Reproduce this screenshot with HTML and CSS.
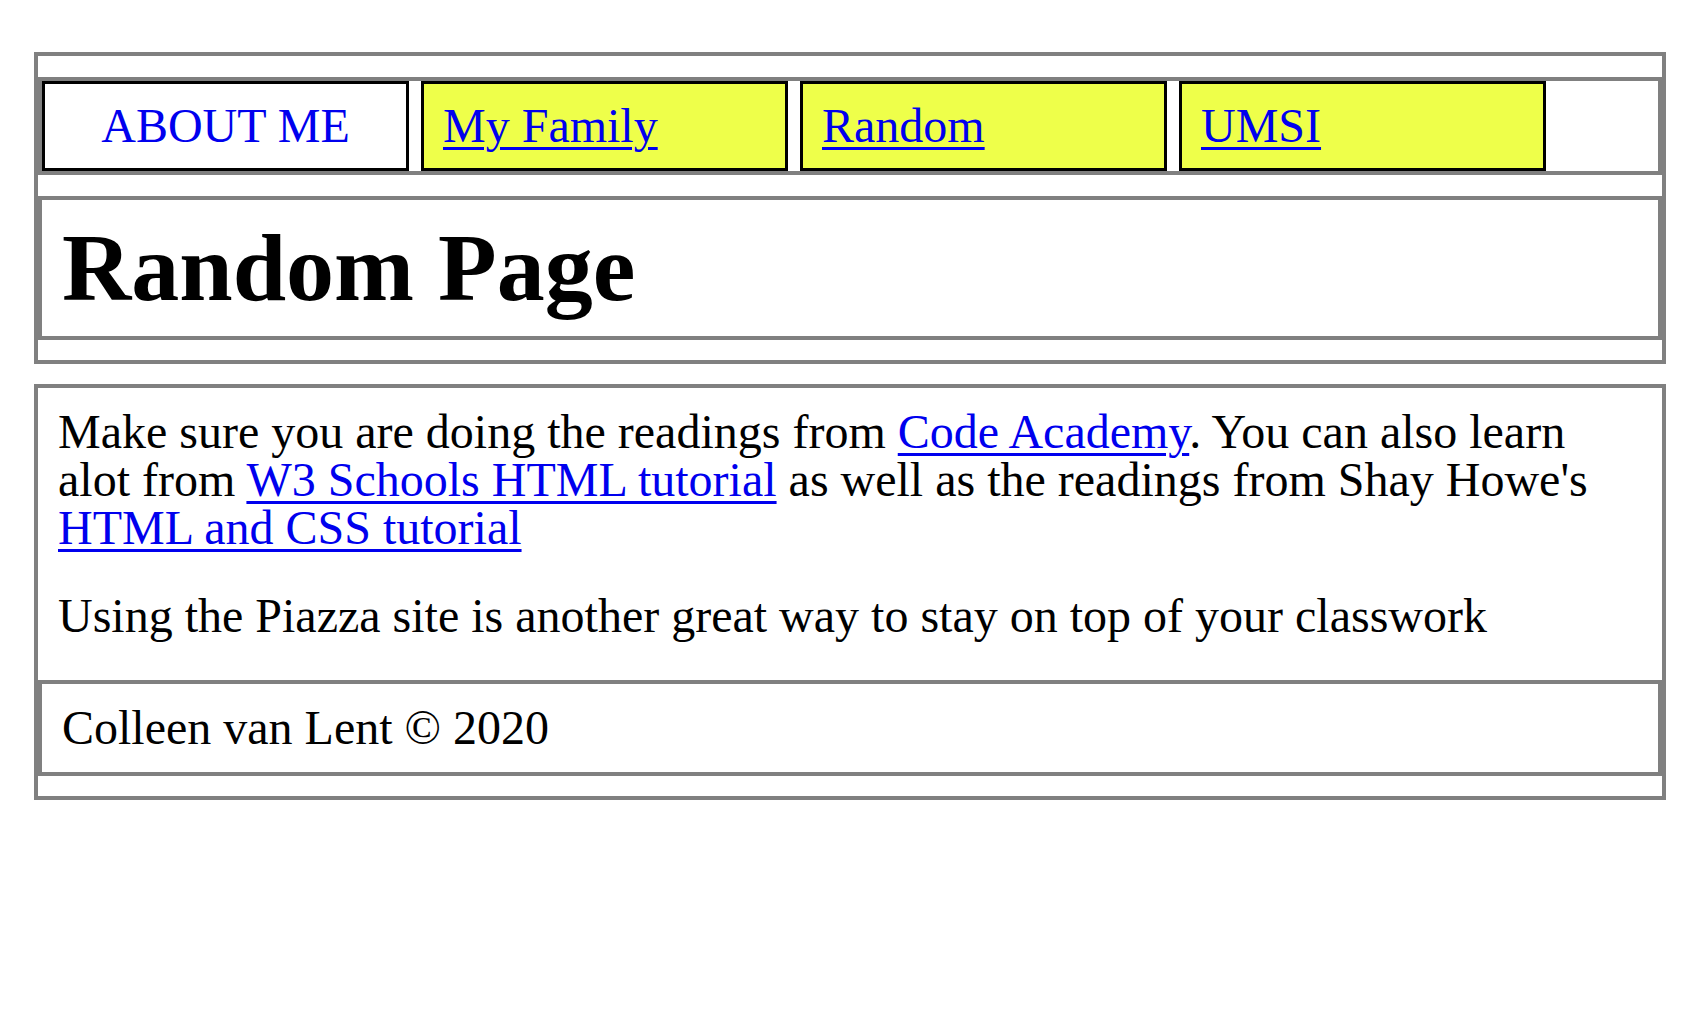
FILE: index.html
```html
<!DOCTYPE html>
<html lang="en">
<head>
<meta charset="utf-8">
<title>Random Page</title>
<link rel="stylesheet" href="styles.css">
</head>
<body>
<header class="site-header">
  <nav class="nav">
    <ul class="nav-list">
      <li class="nav-item nav-item--home"><a class="nav-link nav-link--home" href="#">ABOUT ME</a></li>
      <li class="nav-item"><a class="nav-link" href="#">My Family</a></li>
      <li class="nav-item"><a class="nav-link" href="#">Random</a></li>
      <li class="nav-item"><a class="nav-link" href="#">UMSI</a></li>
    </ul>
  </nav>
  <div class="title-box">
    <h1 class="title">Random Page</h1>
  </div>
</header>
<main class="main">
  <p class="text">Make sure you are doing the readings from <a href="#">Code Academy</a>. You can also learn alot from <a href="#">W3 Schools HTML tutorial</a> as well as the readings from Shay Howe's <a href="#">HTML and CSS tutorial</a></p>
  <p class="text">Using the Piazza site is another great way to stay on top of your classwork</p>
  <footer class="footer">Colleen van Lent &copy; 2020</footer>
</main>
</body>
</html>
```

FILE: styles.css
```css
html, body {
  background: #ffffff;
}

body {
  margin: 0;
  padding: 52px 34px 0;
  font-family: "Liberation Serif", "Times New Roman", serif;
  font-size: 48px;
  line-height: 48px;
  color: #000000;
}

a {
  color: #0000ee;
  text-decoration-thickness: 3px;
  text-underline-offset: 5px;
}

.site-header {
  border: 4px solid #808080;
}

.nav {
  margin: 21px 0;
  border: 4px solid #808080;
}

.nav-list {
  display: flex;
  gap: 12px;
  list-style: none;
  margin: 0;
  padding: 0;
}

.nav-item {
  box-sizing: border-box;
  width: 367px;
  border: 3px solid #000000;
  background: #eeff4a;
  padding: 18px 0 18px 19px;
}

.nav-item--home {
  background: #ffffff;
  text-align: center;
  padding-left: 0;
}

.nav-link--home {
  text-decoration: none;
}

.title-box {
  margin: 21px 0 20px;
  border: 4px solid #808080;
  padding: 20px;
}

.title {
  margin: 0;
  font-size: 96px;
  line-height: 96px;
  font-weight: bold;
}

.main {
  margin-top: 20px;
  border: 4px solid #808080;
}

.text {
  margin: 0;
  padding: 20px;
}

.footer {
  margin: 20px 0;
  border: 4px solid #808080;
  padding: 20px;
}
```
